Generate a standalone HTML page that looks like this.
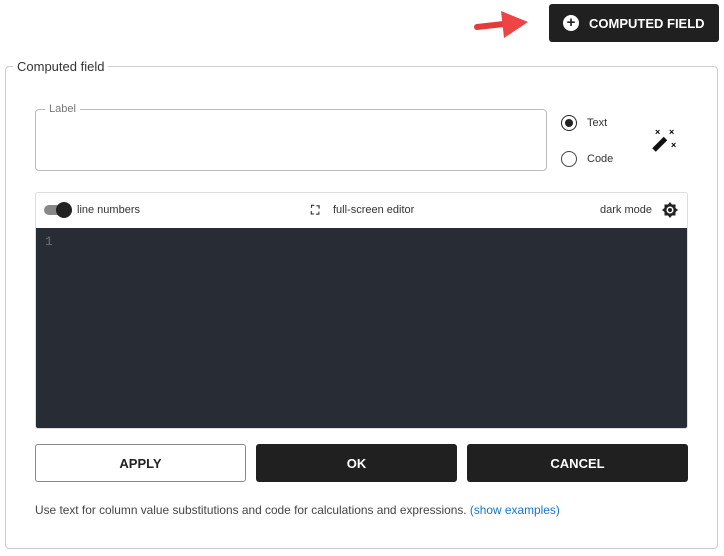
<!DOCTYPE html>
<html><head><style>
body{margin:0;width:724px;height:556px;background:#fff;font-family:"Liberation Sans",sans-serif;position:relative;overflow:hidden}
.a{position:absolute}
.btn{position:absolute;border-radius:3px;font-weight:bold;font-size:13px;display:flex;align-items:center;justify-content:center;box-sizing:border-box}
.dark{background:#202020;color:#fff}
</style></head><body>
<svg class="a" style="left:472px;top:6px" width="60" height="34"><path d="M5 21 L32 18" stroke="#e63b3b" stroke-width="6" stroke-linecap="round"/><path d="M29 5 L56 16 L32 32 Z" fill="#ef4444"/></svg>
<div class="btn dark" style="left:549px;top:4px;width:170px;height:38px;font-size:13px;justify-content:flex-start;padding-left:14px"><span style="display:inline-block;width:16px;height:16px;border-radius:50%;background:#fff;color:#202020;text-align:center;line-height:16px;font-size:15px;margin-right:10px">+</span>COMPUTED FIELD</div>
<div class="a" style="left:5px;top:66px;width:713px;height:483px;border:1px solid #ccc;border-radius:4px;box-sizing:border-box"></div>
<div class="a" style="left:13px;top:59px;background:#fff;padding:0 4px;font-size:13px;color:#333">Computed field</div>
<div class="a" style="left:35px;top:109px;width:512px;height:62px;border:1px solid #bbb;border-radius:4px;box-sizing:border-box"></div>
<div class="a" style="left:45px;top:103px;background:#fff;padding:0 4px;font-size:11px;color:#777">Label</div>
<div class="a" style="left:561px;top:115px;width:14px;height:14px;border:1.5px solid #222;border-radius:50%"><div style="position:absolute;left:3px;top:3px;width:8px;height:8px;border-radius:50%;background:#222"></div></div>
<div class="a" style="left:587px;top:117px;font-size:11px;color:#333">Text</div>
<div class="a" style="left:561px;top:151px;width:14px;height:14px;border:1.5px solid #444;border-radius:50%"></div>
<div class="a" style="left:587px;top:153px;font-size:11px;color:#333">Code</div>
<svg class="a" style="left:650px;top:126px" width="30" height="28"><path d="M4 24 L16 12" stroke="#111" stroke-width="5"/><path d="M14 10 L18 14" stroke="#fff" stroke-width="1.5"/><text x="5" y="9" font-size="9" font-weight="bold">×</text><text x="19" y="9" font-size="9" font-weight="bold">×</text><text x="21" y="22" font-size="9" font-weight="bold">×</text></svg>
<div class="a" style="left:35px;top:192px;width:653px;height:237px;border:1px solid #ddd;border-radius:3px;box-sizing:border-box;overflow:hidden">
<div style="height:35px;background:#fff;position:relative;font-size:11px;color:#333">
<div class="a" style="left:8px;top:12px;width:26px;height:10px;border-radius:5px;background:#888"></div>
<div class="a" style="left:20px;top:9px;width:16px;height:16px;border-radius:50%;background:#222"></div>
<div class="a" style="left:41px;top:11px">line numbers</div>
<div class="a" style="left:275px;top:10px;font-size:12px;font-weight:bold">⛶</div>
<div class="a" style="left:297px;top:11px">full-screen editor</div>
<div class="a" style="left:564px;top:11px">dark mode</div>
<svg class="a" style="left:625px;top:8px" width="18" height="18"><path d="M9 1 L11 3.5 L14.5 3.5 L14.5 7 L17 9 L14.5 11 L14.5 14.5 L11 14.5 L9 17 L7 14.5 L3.5 14.5 L3.5 11 L1 9 L3.5 7 L3.5 3.5 L7 3.5 Z" fill="#222"/><circle cx="9" cy="9" r="3.5" fill="#fff"/><circle cx="9" cy="9" r="2" fill="#222"/></svg>
</div>
<div style="height:200px;background:#282c34;position:relative"><div class="a" style="left:9px;top:6px;color:#6b7180;font-family:'Liberation Mono',monospace;font-size:13px">1</div></div>
</div>
<div class="btn" style="left:35px;top:444px;width:211px;height:38px;border:1px solid #888;color:#222">APPLY</div>
<div class="btn dark" style="left:256px;top:444px;width:201px;height:38px">OK</div>
<div class="btn dark" style="left:467px;top:444px;width:221px;height:38px">CANCEL</div>
<div class="a" style="left:35px;top:503px;font-size:11.9px;color:#444">Use text for column value substitutions and code for calculations and expressions. <span style="color:#1a73c8">(show examples)</span></div>
</body></html>
